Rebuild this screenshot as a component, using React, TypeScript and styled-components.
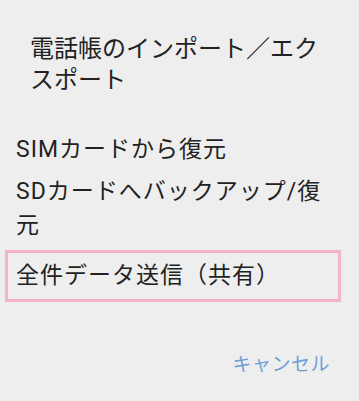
import React from "react";
import styled, { createGlobalStyle } from "styled-components";

const GlobalStyle = createGlobalStyle`
  html, body {
    margin: 0;
    padding: 0;
    background: #eeeeee;
  }
  body {
    font-family: Roboto, "Noto Sans CJK JP", sans-serif;
  }
`;

const options = [
  { label: "SIMカードから復元", selected: false },
  { label: "SDカードへバックアップ/復元", selected: false },
  { label: "全件データ送信（共有）", selected: true },
];

export default function App() {
  return (
    <>
      <GlobalStyle />
      <Dialog>
        <Title>電話帳のインポート／エクスポート</Title>
        <OptionList>
          {options.map((option) => (
            <Option key={option.label} $selected={option.selected}>
              {option.label}
            </Option>
          ))}
        </OptionList>
        <Footer>
          <CancelButton type="button">キャンセル</CancelButton>
        </Footer>
      </Dialog>
    </>
  );
}

const Dialog = styled.div`
  width: 359px;
  height: 401px;
  box-sizing: border-box;
  background-color: #eeeeee;
  display: flex;
  flex-direction: column;
  padding: 34px 0 0 5px;
`;

const Title = styled.h2`
  width: 300px;
  margin: 0;
  padding: 0 0 0 25px;
  font-size: 24px;
  font-weight: 400;
  line-height: 31px;
  color: #222222;
`;

const OptionList = styled.div`
  display: flex;
  flex-direction: column;
  width: 336px;
  margin-top: 33px;
`;

const Option = styled.div<{ $selected: boolean }>`
  border: 3px solid ${({ $selected }) => ($selected ? "#f5b4c9" : "transparent")};
  padding: ${({ $selected }) => ($selected ? "6px 8px" : "1px 8px")};
  margin-top: ${({ $selected }) => ($selected ? "3px" : "0")};
  font-size: 23px;
  line-height: 34px;
  letter-spacing: 1px;
  color: #222222;
`;

const Footer = styled.div`
  display: flex;
  justify-content: flex-end;
  padding-right: 29px;
  margin-top: 50px;
`;

const CancelButton = styled.button`
  border: none;
  background: none;
  padding: 0;
  font-family: inherit;
  font-size: 19px;
  line-height: 26px;
  letter-spacing: 0.5px;
  color: #6a9fd6;
  cursor: pointer;
`;
